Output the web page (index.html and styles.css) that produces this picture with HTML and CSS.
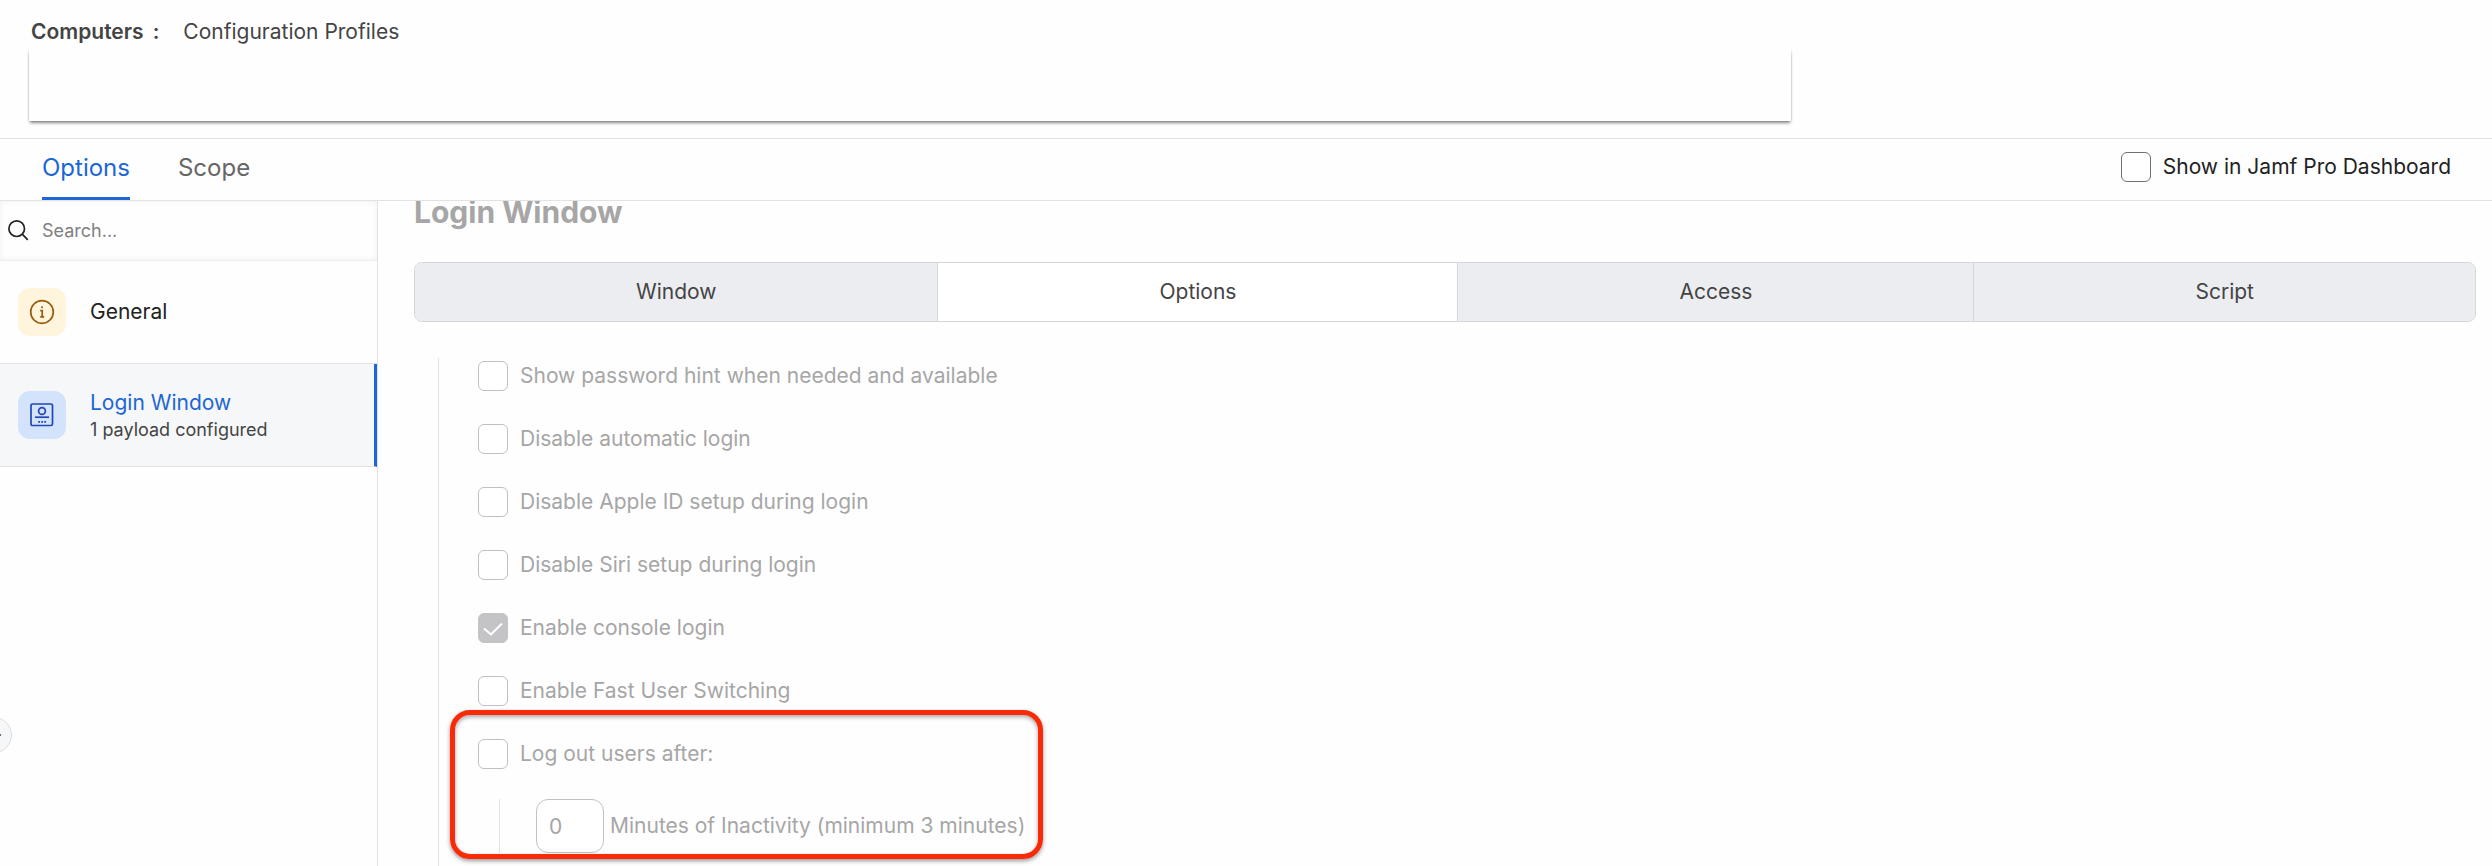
FILE: index.html
```html
<!DOCTYPE html>
<html lang="en">

<head>
    <meta charset="UTF-8" />
    <meta name="viewport" content="width=device-width, initial-scale=1.0" />
    <title>Configuration Profiles</title>
    <link rel="stylesheet" href="styles.css">
</head>

<body>
    <header class="breadcrumb">
        <strong>Computers</strong>
        <span class="colon">:</span>
        <span>Configuration Profiles</span>
    </header>

    <div class="card-area">
        <div class="card"></div>
    </div>

    <div class="tab-bar">
        <nav class="tabs">
            <a href="#options" class="tab active">Options</a>
            <a href="#scope" class="tab">Scope</a>
        </nav>
        <label class="check dashboard"><input type="checkbox">Show in Jamf Pro Dashboard</label>
    </div>

    <div class="content">
        <aside class="sidebar">
            <label class="search">
                <svg width="22" height="22" viewBox="0 0 22 22" fill="none" stroke="#222" stroke-width="1.7">
                    <circle cx="8.7" cy="8.7" r="7.8" />
                    <path d="M14.2 14.2l5.6 5.6" />
                </svg>
                <input type="text" placeholder="Search..." aria-label="Search">
            </label>
            <a href="#general" class="payload">
                <span class="icon general">
                    <svg width="26" height="26" viewBox="0 0 26 26" fill="none" stroke="#9a5a0c" stroke-width="1.7">
                        <circle cx="13" cy="13" r="11.3" />
                        <path d="M11.2 11.6h2v5.8M11.2 17.8h4" />
                        <circle cx="13" cy="8.2" r="1" fill="#9a5a0c" stroke="none" />
                    </svg>
                </span>
                <span class="name">General</span>
            </a>
            <a href="#login-window" class="payload active">
                <span class="icon login">
                    <svg width="26" height="26" viewBox="0 0 26 26" fill="none" stroke="#2347b5" stroke-width="1.7">
                        <rect x="2" y="2" width="21.5" height="21.5" rx="1.5" />
                        <circle cx="13" cy="9" r="3.4" />
                        <path d="M6 15.2h14" />
                        <path d="M9.2 19.8h1.8M12.2 19.8h1.8M15.2 19.8h1.8" />
                    </svg>
                </span>
                <span class="text">
                    <span class="name">Login Window</span>
                    <span class="status">1 payload configured</span>
                </span>
            </a>
        </aside>

        <main class="panel">
            <h2>Login Window</h2>
            <div class="segments">
                <button type="button">Window</button>
                <button type="button" class="active">Options</button>
                <button type="button">Access</button>
                <button type="button">Script</button>
            </div>
            <div class="settings">
                <label class="check"><input type="checkbox" disabled>Show password hint when needed and available</label>
                <label class="check"><input type="checkbox" disabled>Disable automatic login</label>
                <label class="check"><input type="checkbox" disabled>Disable Apple ID setup during login</label>
                <label class="check"><input type="checkbox" disabled>Disable Siri setup during login</label>
                <label class="check"><input type="checkbox" checked disabled>Enable console login</label>
                <label class="check"><input type="checkbox" disabled>Enable Fast User Switching</label>
                <div class="logout">
                    <label class="check"><input type="checkbox" disabled>Log out users after:</label>
                    <div class="minutes">
                        <input type="text" id="minutes" value="0" disabled>
                        <label for="minutes">Minutes of Inactivity (minimum 3 minutes)</label>
                    </div>
                </div>
            </div>
        </main>
    </div>

    <button type="button" class="collapse" aria-label="Toggle navigation">
        <svg width="8" height="12" viewBox="0 0 8 12" fill="none" stroke="#333" stroke-width="1.7">
            <path d="M1 1l5 5-5 5" />
        </svg>
    </button>
</body>

</html>
```
FILE: styles.css
```css
:root{
    --blue: #1c66d6;
    --line: #e2e2e4;
    --text: #222;
    --muted: #a6a6a6;
}

*{
    box-sizing: border-box;
}
body{
    margin: 0;
    height: 100vh;
    display: flex;
    flex-direction: column;
    overflow: hidden;
    background-color: #fefefe;
    color: var(--text);
    font-family: Inter, sans-serif;
    font-size: 21px;
    line-height: 30px;
}
a{
    text-decoration: none;
    color: inherit;
}
input, button{
    font: inherit;
    color: inherit;
    margin: 0;
}

.breadcrumb{
    display: flex;
    height: 50px;
    flex-shrink: 0;
    padding: 17px 31px 0;
    color: #444;
}
.breadcrumb strong{
    font-weight: 600;
}
.breadcrumb .colon{
    margin: 0 24px 0 9px;
    font-weight: 600;
}

.card-area{
    flex-shrink: 0;
    overflow: hidden;
    padding: 0 29px 17px;
    border-bottom: 1px solid var(--line);
}
.card{
    max-width: 1762px;
    height: 71px;
    background-color: #fefefe;
    box-shadow: 0 3px 3px -1px rgba(0, 0, 0, 0.45), 0 0 2px rgba(0, 0, 0, 0.25);
}

.tab-bar{
    display: flex;
    justify-content: space-between;
    flex-shrink: 0;
    height: 62px;
    padding: 0 41px 0 42px;
    border-bottom: 1px solid var(--line);
}
.tabs{
    display: flex;
    gap: 48px;
    font-size: 24px;
    color: #666;
}
.tab{
    padding-top: 14px;
}
.tab.active{
    color: var(--blue);
    border-bottom: 3px solid var(--blue);
}

.check{
    display: flex;
    align-items: center;
    gap: 12px;
}
.check input{
    appearance: none;
    width: 30px;
    height: 30px;
    border: 1px solid #707070;
    border-radius: 6px;
    background-color: #fff;
}
.check input:disabled{
    border-color: #c0c0c2;
}
.check input:checked{
    border-color: #c4c4c6;
    background: #c4c4c6 url("data:image/svg+xml,%3Csvg xmlns='http://www.w3.org/2000/svg' viewBox='0 0 28 28' fill='none' stroke='white' stroke-width='2'%3E%3Cpath d='M5 14.5l7 6 11-11'/%3E%3C/svg%3E") center no-repeat;
}
.dashboard{
    align-self: flex-start;
    padding-top: 13px;
}

.content{
    display: flex;
    flex: 1;
    min-height: 0;
}
.sidebar{
    width: 378px;
    flex-shrink: 0;
    border-right: 1px solid var(--line);
}
.search{
    display: flex;
    align-items: center;
    gap: 12px;
    height: 60px;
    padding-left: 8px;
    border-bottom: 1px solid #eee;
    box-shadow: inset 0 0 6px rgba(0, 0, 0, 0.06);
}
.search input{
    flex: 1;
    min-width: 0;
    padding: 0;
    border: none;
    outline: none;
    background: none;
    font-size: 18px;
}
.search input::placeholder{
    color: #808080;
}
.payload{
    display: flex;
    align-items: center;
    gap: 24px;
    height: 103px;
    padding-left: 18px;
    border-bottom: 1px solid var(--line);
}
.payload.active{
    background-color: #f5f7f9;
    border-right: 3px solid var(--blue);
}
.payload.active .name{
    color: var(--blue);
}
.icon{
    display: flex;
    align-items: center;
    justify-content: center;
    width: 48px;
    height: 48px;
    border-radius: 12px;
}
.icon.general{
    background-color: #fff5dc;
}
.icon.login{
    background-color: #d3e3fb;
}
.text{
    display: flex;
    flex-direction: column;
}
.text .status{
    font-size: 18px;
    line-height: 24px;
    color: #444;
}

.panel{
    flex: 1;
    overflow: hidden;
    padding: 0 16px 0 36px;
    color: var(--muted);
}
.panel h2{
    margin: 0 0 39px;
    font-size: 30px;
    font-weight: 700;
    line-height: 22px;
}
.segments{
    display: flex;
    border: 1px solid #d5d6d9;
    border-radius: 8px;
    overflow: hidden;
}
.segments button{
    flex: 1 1 auto;
    height: 58px;
    padding: 0;
    border: none;
    background-color: #ecedf1;
    color: #444;
}
.segments button + button{
    border-left: 1px solid #d5d6d9;
}
.segments .active{
    background-color: #fff;
}

.settings{
    display: flex;
    flex-direction: column;
    gap: 33px;
    height: 100%;
    margin: 36px 0 0 24px;
    padding: 3px 0 0 39px;
    border-left: 1px solid var(--line);
}
.logout{
    position: relative;
    width: fit-content;
}
.logout::after{
    content: "";
    position: absolute;
    inset: -29px -18px -6px -28px;
    border: 5px solid #f92a08;
    border-radius: 20px;
    box-shadow: 0 2px 4px rgba(0, 0, 0, 0.4), inset 0 2px 4px rgba(0, 0, 0, 0.35);
    pointer-events: none;
}
.minutes{
    display: flex;
    align-items: center;
    gap: 6px;
    margin: 30px 0 0 21px;
    padding-left: 36px;
    border-left: 1px solid var(--line);
}
.minutes input{
    width: 68px;
    height: 54px;
    padding: 0 12px;
    border: 1px solid #c0c0c2;
    border-radius: 12px;
    background-color: #fff;
    color: var(--muted);
}

/* half hidden past the left edge of the window */
.collapse{
    position: absolute;
    left: -24px;
    top: 717px;
    display: flex;
    align-items: center;
    justify-content: flex-end;
    width: 36px;
    height: 36px;
    padding: 0 9px 0 0;
    border: 1px solid #dcdcdf;
    border-radius: 50%;
    background-color: #f5f7f9;
}
```
